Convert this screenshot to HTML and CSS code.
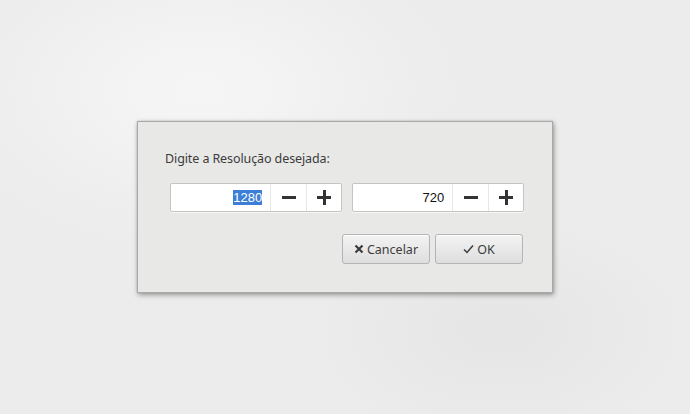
FILE: index.html
```html
<!DOCTYPE html>
<html>
<head>
<meta charset="utf-8">
<link rel="stylesheet" href="styles.css">
</head>
<body>
<div class="desk">
  <div class="dialog">
    <div class="label">Digite a Resolução desejada:</div>
    <div class="spins">
      <div class="spin">
        <div class="entry"><span class="sel">1280</span></div>
        <div class="sbtn"><span class="minus"></span></div>
        <div class="sbtn"><span class="plus"></span></div>
      </div>
      <div class="spin">
        <div class="entry"><span>720</span></div>
        <div class="sbtn"><span class="minus"></span></div>
        <div class="sbtn"><span class="plus"></span></div>
      </div>
    </div>
    <div class="actions">
      <button class="btn"><svg class="ico" width="10" height="10" viewBox="0 0 10 10"><path d="M1.5 1.5 L8.5 8.5 M8.5 1.5 L1.5 8.5" stroke="#3c3c3c" stroke-width="2.2" stroke-linecap="butt"/></svg>Cancelar</button>
      <button class="btn"><svg class="ico" width="11" height="10" viewBox="0 0 11 10"><path d="M1 5.5 L4 8.5 L10 1.5" stroke="#3c3c3c" stroke-width="1.5" fill="none"/></svg>OK</button>
    </div>
  </div>
</div>
</body>
</html>
```
FILE: styles.css
```css
html, body {
  margin: 0;
  padding: 0;
}
body {
  width: 690px;
  height: 414px;
  overflow: hidden;
  font-family: "Noto Sans", "DejaVu Sans", sans-serif;
}
.desk {
  width: 690px;
  height: 414px;
  box-sizing: border-box;
  padding-top: 121px;
  padding-left: 137px;
  background:
    radial-gradient(ellipse 260px 160px at 200px 90px, rgba(250,250,250,0.7), rgba(250,250,250,0) 100%),
    radial-gradient(ellipse 200px 120px at 500px 330px, rgba(225,225,225,0.6), rgba(225,225,225,0) 100%),
    #ececec;
}
.dialog {
  width: 416px;
  height: 172px;
  box-sizing: border-box;
  background: #e8e8e7;
  border: 1px solid #a9a9a9;
  box-shadow: 1px 2px 5px rgba(0,0,0,0.35), 0 0 2px rgba(0,0,0,0.15);
  padding: 28px 0 0 27px;
}
.label {
  font-size: 12.5px;
  color: #3c3c3c;
  line-height: 17px;
  height: 17px;
  letter-spacing: -0.1px;
}
.spins {
  display: flex;
  gap: 10px;
  margin-top: 16px;
  margin-left: 5px;
}
.spin {
  display: flex;
  width: 172px;
  height: 29px;
  box-sizing: border-box;
  border: 1px solid #c4c4c4;
  border-radius: 2px;
  background: #fff;
  box-shadow: 0 1px 0 rgba(255,255,255,0.6);
}
.entry {
  width: 101px;
  display: flex;
  align-items: center;
  justify-content: flex-end;
  padding-right: 8px;
  box-sizing: border-box;
  font-family: "Liberation Sans", Arial, sans-serif;
  font-size: 13px;
  color: #111;
}
.entry span {
  line-height: 15px;
}
.sel {
  background: #3d7fd6;
  color: #fff;
}
.sbtn {
  width: 35px;
  border-left: 1px solid #e6e6e6;
  display: flex;
  align-items: center;
  justify-content: center;
  position: relative;
}
.minus, .plus {
  display: block;
  width: 15px;
  height: 15px;
  position: relative;
}
.minus::before, .plus::before, .plus::after {
  content: "";
  position: absolute;
  background: #333;
}
.minus::before, .plus::before {
  left: 1px;
  right: 0;
  top: 6px;
  height: 2.5px;
}
.plus::after {
  top: 0;
  bottom: 0;
  left: 7px;
  width: 2.5px;
}
.actions {
  display: flex;
  justify-content: flex-end;
  gap: 5px;
  margin-top: 22px;
  margin-right: 29px;
}
.btn {
  width: 88px;
  height: 30px;
  box-sizing: border-box;
  border: 1px solid #b4b4b4;
  border-radius: 3px;
  background: linear-gradient(#f3f3f3, #dedede);
  box-shadow: inset 0 1px 0 #fff;
  font-family: "Noto Sans", "DejaVu Sans", sans-serif;
  font-size: 12.5px;
  color: #3c3c3c;
  display: flex;
  align-items: center;
  justify-content: center;
  gap: 3px;
  padding: 0;
}
.ico {
  display: block;
}
```
